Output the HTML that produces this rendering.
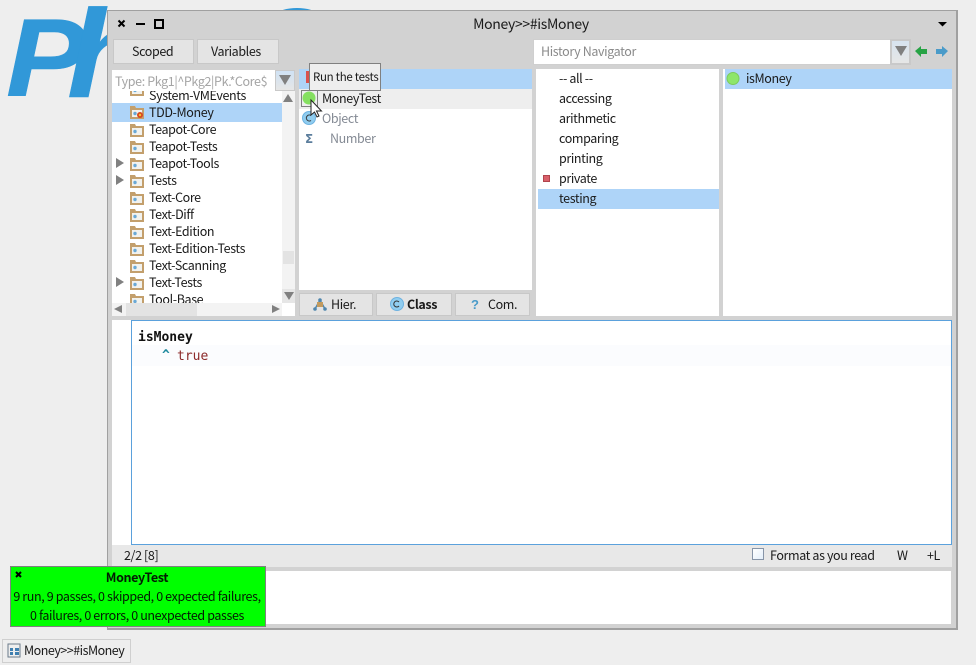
<!DOCTYPE html>
<html><head><meta charset="utf-8">
<style>
html,body{margin:0;padding:0;width:976px;height:665px;overflow:hidden;background:#eee}
*{box-sizing:border-box}
.a{position:absolute}
.t{position:absolute;font:12.500px/18px "Noto Sans CJK JP","Liberation Sans",sans-serif;letter-spacing:-.38px;color:#1a1a1a;white-space:nowrap}
.g{color:#8a8a8a}
.btn{position:absolute;background:#e4e4e4;border:1px solid #c8c8c8}
.c{text-align:center}
.m{font:13px/18px "DejaVu Sans Mono","Liberation Mono",monospace;position:absolute;white-space:nowrap}
svg{position:absolute;overflow:visible}
.logo{position:absolute;font:italic bold 110px/1 'Liberation Sans',sans-serif;color:#3198d8;transform-origin:0 0;-webkit-text-stroke:.5px #3198d8}
</style></head><body>
<div class="logo" style="left:6px;top:4px;transform:scaleX(1.1)">P</div>
<div class="logo" style="left:67px;top:-8px;font-size:125px;transform:scaleX(1.1)">h</div>
<div class="a" style="left:278px;top:8px;width:38px;height:12px;border-radius:50%;background:#3198d8"></div>

<div class="a" style="left:107px;top:10px;width:851px;height:620px;background:#d2d2d2;border:1px solid #a0a0a0;border-width:1px 2px 2px 1px"></div>

<!-- title bar -->
<svg style="left:0;top:0" width="976" height="665">
<path d="M118.500 20.500l6 6m0-6l-6 6" stroke="#000" stroke-width="2"/>
<rect x="136" y="23" width="9" height="2" fill="#000"/>
<rect x="155" y="20" width="8" height="8" fill="none" stroke="#000" stroke-width="2"/>
<path d="M938 22h9l-4.500 4.500z" fill="#000"/>
</svg>
<div class="t c" style="left:400px;width:262px;top:15px;font-size:14px;letter-spacing:-.33px">Money&gt;&gt;#isMoney</div>

<div class="btn t" style="left:113px;top:39px;width:81px;height:25px;line-height:22px;padding-left:18px">Scoped</div>
<div class="btn t" style="left:197px;top:39px;width:82px;height:25px;line-height:22px;padding-left:13px">Variables</div>

<!-- history -->
<div class="a" style="left:533px;top:39px;width:378px;height:26px;background:#fff;border:1px solid #cfcfcf"></div>
<div class="t g" style="left:541px;top:42px">History Navigator</div>
<div class="a" style="left:890px;top:39px;width:21px;height:26px;background:linear-gradient(#d7e4f0,#e6e6e6);border:2px solid #c9c9c9"></div>
<svg style="left:0;top:0" width="976" height="665">
<path d="M895 46h12l-6 10z" fill="#808080"/>
<path d="M915 51l6-5v3h6v5h-6v3z" fill="#27a345"/>
<path d="M948 51l-6-5v3h-6v5h6v3z" fill="#4a9bc9"/>
</svg>

<!-- filter -->
<div class="a" style="left:112px;top:70px;width:163px;height:21px;background:#fff"></div>
<div class="t" style="left:115px;top:72px;color:#a5a5a5">Type: Pkg1|^Pkg2|Pk.*Core$</div>
<div class="a" style="left:275px;top:70px;width:20px;height:21px;background:linear-gradient(#cfe2f4,#e6e6e6);border:1px solid #c9c9c9"></div>
<svg style="left:0;top:0" width="976" height="665"><path d="M279 75h12l-6 10z" fill="#808080"/></svg>

<!-- package list -->
<div class="a" style="left:112px;top:91px;width:170px;height:212px;background:#fff;overflow:hidden">
<div class="a" style="left:0;top:12px;width:170px;height:19px;background:#aed4f8"></div>
<div class="t" style="left:37px;top:-5px">System-VMEvents</div>
<div class="t" style="left:37px;top:12px">TDD-Money</div>
<div class="t" style="left:37px;top:29px">Teapot-Core</div>
<div class="t" style="left:37px;top:46px">Teapot-Tests</div>
<div class="t" style="left:37px;top:63px">Teapot-Tools</div>
<div class="t" style="left:37px;top:80px">Tests</div>
<div class="t" style="left:37px;top:97px">Text-Core</div>
<div class="t" style="left:37px;top:114px">Text-Diff</div>
<div class="t" style="left:37px;top:131px">Text-Edition</div>
<div class="t" style="left:37px;top:148px">Text-Edition-Tests</div>
<div class="t" style="left:37px;top:165px">Text-Scanning</div>
<div class="t" style="left:37px;top:182px">Text-Tests</div>
<div class="t" style="left:37px;top:199px">Tool-Base</div>
<svg style="left:0;top:0" width="170" height="212">
<defs><g id="f"><path d="M0 0h5l1 2h8v11H0z" fill="#c39f6c"/><rect x="2" y="4" width="10" height="7" fill="#f2f2ee"/><circle cx="5" cy="7.500" r="1.700" fill="#6aa9d6"/></g></defs>
<use href="#f" x="18" y="-8"/><use href="#f" x="18" y="15"/><use href="#f" x="18" y="33"/><use href="#f" x="18" y="50"/><use href="#f" x="18" y="67"/><use href="#f" x="18" y="84"/><use href="#f" x="18" y="101"/><use href="#f" x="18" y="118"/><use href="#f" x="18" y="135"/><use href="#f" x="18" y="152"/><use href="#f" x="18" y="169"/><use href="#f" x="18" y="186"/><use href="#f" x="18" y="203"/>
<circle cx="28" cy="24" r="3" fill="#d9481f"/><circle cx="28" cy="24" r="1.200" fill="#f4c430"/>
<path d="M4 67l8 5-8 5zM4 84l8 5-8 5zM4 186l8 5-8 5z" fill="#808080"/>
</svg>
</div>
<!-- vscroll -->
<div class="a" style="left:282px;top:91px;width:13px;height:212px;background:#f3f3f3"></div>
<div class="a" style="left:283px;top:251px;width:11px;height:13px;background:#e3e3e3"></div>
<div class="a" style="left:282px;top:289px;width:13px;height:14px;background:#e6e6e6"></div>
<div class="a" style="left:112px;top:303px;width:170px;height:13px;background:#f3f3f3"></div>
<div class="a" style="left:126px;top:303px;width:71px;height:13px;background:#e3e3e3"></div>
<div class="a" style="left:282px;top:303px;width:13px;height:13px;background:#fff"></div>
<svg style="left:0;top:0" width="976" height="665">
<path d="M283 102l5-8 5 8z" fill="#808080"/>
<path d="M284 292h10l-5 8z" fill="#808080"/>
<path d="M122 305v8l-8-4z" fill="#808080"/>
<path d="M272 305v8l8-4z" fill="#808080"/>
</svg>

<!-- class list -->
<div class="a" style="left:299px;top:69px;width:233px;height:221px;background:#fff"></div>
<div class="a" style="left:299px;top:69px;width:233px;height:20px;background:#aed4f8"></div>
<div class="a" style="left:299px;top:89px;width:233px;height:20px;background:#eee"></div>
<div class="t" style="left:322px;top:89px">MoneyTest</div>
<div class="t" style="left:322px;top:109px;color:#848a94">Object</div>
<div class="t" style="left:330px;top:129px;color:#848a94">Number</div>
<svg style="left:0;top:0" width="976" height="665">
<rect x="306" y="71" width="3" height="12" fill="#d9534f"/>
<rect x="301.500" y="90.500" width="16" height="16" fill="none" stroke="#808080"/>
<circle cx="309" cy="98" r="6.500" fill="#85e060"/>
<circle cx="309" cy="118" r="6.500" fill="#90cdf0" stroke="#6eb2e0"/>
<path d="M311 115.500a3 3 0 1 0 0 5" fill="none" stroke="#333" stroke-width="1"/>
<text x="305" y="143" font-family="DejaVu Sans" font-weight="bold" font-size="12" fill="#5b7d9c">Σ</text>
<path d="M311 100v15l3.500-3 2.500 5 2-1-2.500-5h5z" fill="#fff" stroke="#222" stroke-width="1"/>
</svg>
<div class="a t" style="left:309px;top:63px;width:72px;height:28px;background:#eee;border:1px solid #808080;font-size:11.500px;letter-spacing:-.3px;line-height:26px;padding-left:3px">Run the tests</div>

<!-- class buttons -->
<div class="btn t" style="left:299px;top:293px;width:74px;height:23px;line-height:20px;padding-left:31px">Hier.</div>
<div class="btn t" style="left:376px;top:293px;width:76px;height:23px;line-height:20px;padding-left:30px;font-weight:700">Class</div>
<div class="btn t" style="left:455px;top:293px;width:75px;height:23px;line-height:20px;padding-left:32px">Com.</div>
<svg style="left:0;top:0" width="976" height="665">
<path d="M320 300l-5 9M320 300l5 9" stroke="#4f86ad" stroke-width="1.500"/>
<rect x="317" y="302" width="6" height="5" fill="#c29a5e"/>
<circle cx="320" cy="300" r="1.800" fill="#4f86ad"/><circle cx="315" cy="309" r="1.800" fill="#4f86ad"/><circle cx="325" cy="309" r="1.800" fill="#4f86ad"/>
<circle cx="397" cy="304" r="6.500" fill="#90cdf0" stroke="#6eb2e0"/>
<path d="M399 302a3 3 0 1 0 0 4" fill="none" stroke="#333"/>
<text x="471" y="309" font-family="Liberation Sans" font-weight="bold" font-size="13" fill="#4a9bc9">?</text>
</svg>

<!-- protocol list -->
<div class="a" style="left:536px;top:69px;width:183px;height:247px;background:#fff"></div>
<div class="a" style="left:538px;top:189px;width:181px;height:20px;background:#aed4f8"></div>
<div class="t" style="left:559px;top:69px">-- all --</div>
<div class="t" style="left:559px;top:89px">accessing</div>
<div class="t" style="left:559px;top:109px">arithmetic</div>
<div class="t" style="left:559px;top:129px">comparing</div>
<div class="t" style="left:559px;top:149px">printing</div>
<div class="t" style="left:559px;top:169px">private</div>
<div class="t" style="left:559px;top:189px">testing</div>
<div class="a" style="left:543px;top:175px;width:7px;height:7px;background:#d9606a;border:1px solid #b0454d"></div>

<!-- method list -->
<div class="a" style="left:723px;top:69px;width:229px;height:247px;background:#fff"></div>
<div class="a" style="left:725px;top:69px;width:227px;height:20px;background:#aed4f8"></div>
<div class="t" style="left:746px;top:69px">isMoney</div>
<svg style="left:0;top:0" width="976" height="665"><circle cx="733" cy="78.500" r="6" fill="#8ee66a" stroke="#7ccb5c"/></svg>

<!-- code -->
<div class="a" style="left:112px;top:320px;width:840px;height:225px;background:#fff"></div>
<div class="a" style="left:131px;top:320px;width:821px;height:225px;background:#fff;border:1px solid #5ba1dc"></div>
<div class="a" style="left:132px;top:345px;width:819px;height:21px;background:#fbfcfe"></div>
<div class="m" style="left:138px;top:329px;font-weight:bold;color:#111">isMoney</div>
<div class="m" style="left:162px;top:347px;font-weight:bold;color:#1f8a9e">^</div>
<div class="m" style="left:177px;top:348px;color:#8c2a2a">true</div>

<!-- status -->
<div class="a" style="left:112px;top:545px;width:840px;height:22px;background:#e8e8e8"></div>
<div class="t" style="left:124px;top:546px">2/2 [8]</div>
<div class="a" style="left:752px;top:548px;width:12px;height:12px;background:linear-gradient(135deg,#fff,#e4effa);border:1px solid #8795a8"></div>
<div class="t" style="left:770px;top:546px">Format as you read</div>
<div class="t" style="left:897px;top:546px">W</div>
<div class="t" style="left:927px;top:546px">+L</div>

<!-- bottom -->
<div class="a" style="left:112px;top:571px;width:839px;height:53px;background:#fff"></div>

<!-- popup -->
<div class="a" style="left:10px;top:566px;width:256px;height:61px;background:#00ff00;border:1px solid #808080"></div>
<div class="t c" style="left:9px;width:256px;top:568px;font-weight:700;color:#041a04">MoneyTest</div>
<div class="t c" style="left:9px;width:256px;top:587px;color:#041a04">9 run, 9 passes, 0 skipped, 0 expected failures,</div>
<div class="t c" style="left:9px;width:256px;top:606px;color:#041a04">0 failures, 0 errors, 0 unexpected passes</div>
<svg style="left:0;top:0" width="976" height="665"><path d="M16 572l5 5m0-5l-5 5" stroke="#000" stroke-width="2"/></svg>

<!-- taskbar -->
<div class="a" style="left:2px;top:639px;width:129px;height:24px;background:#eee;border:1px solid #cfcfcf"></div>
<div class="t" style="left:24px;top:641px;letter-spacing:-.5px">Money&gt;&gt;#isMoney</div>
<svg style="left:0;top:0" width="976" height="665">
<rect x="8" y="644" width="12" height="13" fill="none" stroke="#6b7b8a"/>
<path d="M10 648h3v3h-3zM15 648h4v3h-4zM10 652h3v3h-3zM15 652h4v3h-4z" fill="#3f7fb0"/>
</svg>
</body></html>
